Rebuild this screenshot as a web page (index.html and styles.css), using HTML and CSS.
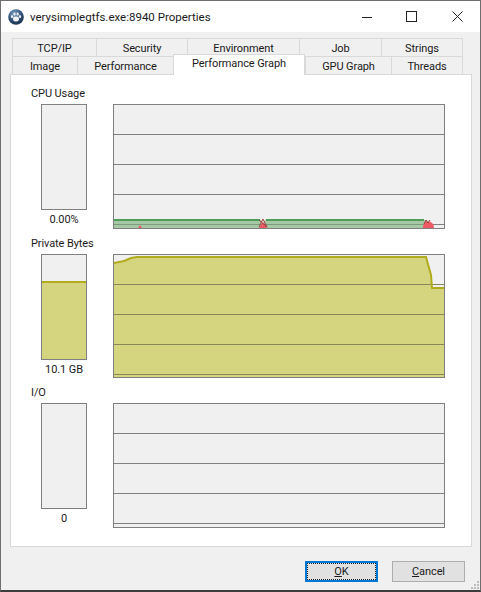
FILE: index.html
```html
<!DOCTYPE html>
<html lang="en">
<head>
<meta charset="utf-8">
<title>verysimplegtfs.exe:8940 Properties</title>
<link rel="stylesheet" href="styles.css">
</head>
<body>
<div class="window">
  <header class="titlebar">
    <svg class="app-icon" width="16" height="16" viewBox="0 0 16 16">
      <defs><radialGradient id="orb" cx="0.4" cy="0.3" r="0.8"><stop offset="0" stop-color="#7fa4c8"/><stop offset="0.6" stop-color="#2b4a70"/><stop offset="1" stop-color="#16263c"/></radialGradient></defs>
      <circle cx="8" cy="8" r="7.8" fill="url(#orb)"/>
      <ellipse cx="8" cy="10" rx="3" ry="2.4" fill="#f2f2f2"/>
      <ellipse cx="4" cy="7.6" rx="1.1" ry="1.5" fill="#f2f2f2"/>
      <ellipse cx="6.5" cy="5" rx="1.1" ry="1.6" fill="#f2f2f2"/>
      <ellipse cx="9.7" cy="5" rx="1.1" ry="1.6" fill="#f2f2f2"/>
      <ellipse cx="12" cy="7.6" rx="1.1" ry="1.5" fill="#f2f2f2"/>
    </svg>
    <span class="title">verysimplegtfs.exe:8940 Properties</span>
    <div class="controls">
      <svg class="ctl" width="10" height="10" viewBox="0 0 10 10"><path d="M0 5.5H10" stroke="#222" fill="none"/></svg>
      <svg class="ctl" width="11" height="11" viewBox="0 0 11 11"><rect x="0.5" y="0.5" width="10" height="10" stroke="#222" fill="none"/></svg>
      <svg class="ctl" width="11" height="11" viewBox="0 0 11 11"><path d="M0.5 0.5L10.5 10.5M10.5 0.5L0.5 10.5" stroke="#222" fill="none"/></svg>
    </div>
  </header>
  <div class="content">
    <div class="tabs">
      <div class="tabrow">
        <div class="tab t-tcp">TCP/IP</div>
        <div class="tab t-sec">Security</div>
        <div class="tab t-env">Environment</div>
        <div class="tab t-job">Job</div>
        <div class="tab t-str">Strings</div>
      </div>
      <div class="tabrow">
        <div class="tab t-img">Image</div>
        <div class="tab t-perf">Performance</div>
        <div class="tab t-graph active">Performance Graph</div>
        <div class="tab t-gpu">GPU Graph</div>
        <div class="tab t-thr">Threads</div>
      </div>
    </div>
    <main class="panel">
      <section class="sec">
        <div class="sec-label">CPU Usage</div>
        <div class="meter"></div>
        <div class="graph">
          <svg width="330" height="123" viewBox="0 0 330 123">
            <path class="fill-g" d="M0 115H147L149 119L151 115H310L315 116V123H0Z"/>
            <path class="grid" d="M0 29.5H330M0 59.5H330M0 89.5H330M310 119.5H330"/>
            <path class="grid-g" d="M0 119.5H310"/>
            <path class="line-g" d="M0 115H146M152 115H310"/>
            <path class="fill-r" d="M24 123L26 120L28 123Z"/>
            <path class="fill-r" d="M145 123L149 117L153 123Z"/>
            <path class="line-r" d="M145 122L149 114L153 122M145 115L153 122"/>
            <path class="fill-r" d="M309 123C309 118 312 116 314 117C317 116 320 119 320 123Z"/>
            <path class="line-r" d="M310 119L312 115L314 118L316 115"/>
          </svg>
        </div>
        <div class="value">0.00%</div>
      </section>
      <section class="sec">
        <div class="sec-label">Private Bytes</div>
        <div class="meter"><div class="meter-fill"></div></div>
        <div class="graph short">
          <svg width="330" height="122" viewBox="0 0 330 122">
            <path class="fill-y" d="M0 8L10 6L17 3L23 2H312L317 20L318 33H330V122H0Z"/>
            <path class="grid-y" d="M0 29.5H330M0 59.5H330M0 89.5H330M0 119.5H330"/>
            <path class="line-y" d="M0 8L10 6L17 3L23 2H312L317 20L318 33H330"/>
          </svg>
        </div>
        <div class="value">10.1 GB</div>
      </section>
      <section class="sec">
        <div class="sec-label">I/O</div>
        <div class="meter"></div>
        <div class="graph">
          <svg width="330" height="123" viewBox="0 0 330 123">
            <path class="grid" d="M0 29.5H330M0 59.5H330M0 89.5H330M0 119.5H330"/>
          </svg>
        </div>
        <div class="value">0</div>
      </section>
    </main>
    <footer class="footer">
      <button class="btn default"><span class="inner"><u>O</u>K</span></button>
      <button class="btn"><span class="inner"><u>C</u>ancel</span></button>
    </footer>
  </div>
  <svg class="grip" width="10" height="10" viewBox="0 0 10 10">
    <path d="M7 1h2v2H7zM4 4h2v2H4zM7 4h2v2H7zM1 7h2v2H1zM4 7h2v2H4zM7 7h2v2H7z" fill="#bdbdbd"/>
  </svg>
</div>
</body>
</html>
```
FILE: styles.css
```css
* { box-sizing: border-box; }
html, body { margin: 0; padding: 0; }
body {
  width: 481px;
  height: 592px;
  overflow: hidden;
  font-family: Roboto, "Noto Sans", sans-serif;
  font-size: 11px;
  letter-spacing: -0.1px;
  color: #1a1a1a;
}
.window {
  position: relative;
  width: 481px;
  height: 592px;
  display: flex;
  flex-direction: column;
  background: #f0f0f0;
  border: 1px solid #6e6e6e;
  border-bottom: 2px solid #3c3c3c;
}
.titlebar {
  height: 31px;
  flex: none;
  background: #fff;
  display: flex;
  align-items: center;
  padding-left: 7px;
}
.app-icon { flex: none; }
.title { margin-left: 6px; font-size: 11.5px; letter-spacing: 0; }
.controls {
  margin-left: auto;
  display: flex;
  align-items: center;
}
.ctl { display: block; }
.ctl:nth-child(1) { margin-right: 34px; }
.ctl:nth-child(2) { margin-right: 35px; }
.ctl:nth-child(3) { margin-right: 17px; }
.content {
  flex: 1;
  display: flex;
  flex-direction: column;
  padding: 6px 8px 0 9px;
}
.tabs { padding-left: 2px; flex: none; }
.tabrow { display: flex; height: 18px; }
.tab {
  display: flex;
  align-items: center;
  justify-content: center;
  flex: none;
  background: #f0f0f0;
  border: 1px solid #d9d9d9;
  border-right: 0;
  border-bottom: 0;
  padding-top: 1px;
  line-height: 1;
}
.tab:last-child { border-right: 1px solid #d9d9d9; }
.t-tcp { width: 84px; }
.t-sec { width: 91px; }
.t-env { width: 112px; }
.t-job { width: 82px; }
.t-str { width: 82px; }
.t-img { width: 65px; }
.t-perf { width: 96px; }
.t-graph { width: 132px; }
.t-gpu { width: 86px; }
.t-thr { width: 72px; }
.tab.active {
  position: relative;
  z-index: 1;
  background: #fff;
  margin: -2px 0 -1px;
  padding: 0 0 3px;
  border-right: 1px solid #d9d9d9;
}
.panel {
  flex: none;
  height: 473px;
  background: #fff;
  border: 1px solid #d9d9d9;
  padding: 10px 0 0 20px;
  display: flex;
  flex-direction: column;
  gap: 6px;
}
.sec {
  display: grid;
  grid-template-columns: 46px 332px;
  grid-template-rows: 19px 106px auto;
  column-gap: 26px;
  padding-left: 10px;
}
.sec-label {
  grid-column: 1 / 3;
  margin-left: -10px;
  line-height: 18px;
}
.meter {
  grid-column: 1;
  grid-row: 2;
  height: 106px;
  background: #f0f0f0;
  border: 1px solid #808080;
  display: flex;
  flex-direction: column;
  justify-content: flex-end;
}
.meter-fill {
  height: 78px;
  background: #d5d57f;
  border-top: 2px solid #b1ab1e;
}
.graph {
  grid-column: 2;
  grid-row: 2 / 4;
  height: 125px;
  background: #f0f0f0;
  border: 1px solid #808080;
}
.graph.short { height: 124px; }
.graph svg { display: block; }
.value {
  grid-column: 1;
  grid-row: 3;
  height: 18px;
  padding-top: 2px;
  line-height: 16px;
  text-align: center;
  white-space: nowrap;
}
.grid { fill: none; stroke: #808080; stroke-width: 1; }
.grid-y { fill: none; stroke: #87875a; stroke-width: 1; }
.grid-g { fill: none; stroke: #7c9c80; stroke-width: 1; }
.fill-g { fill: #a6c8a4; }
.line-g { fill: none; stroke: #4f9d5b; stroke-width: 2; }
.fill-r { fill: #ee5a64; }
.line-r { fill: none; stroke: #a33a3a; stroke-width: 1; }
.fill-y { fill: #d5d57f; }
.line-y { fill: none; stroke: #b1ab1e; stroke-width: 2; }
.footer {
  flex: none;
  display: flex;
  justify-content: flex-end;
  gap: 14px;
  padding: 14px 7px 0 0;
}
.btn {
  width: 73px;
  height: 21px;
  padding: 0;
  background: #e1e1e1;
  border: 1px solid #adadad;
  font: inherit;
  letter-spacing: inherit;
  color: inherit;
  display: block;
}
.btn .inner {
  display: flex;
  align-items: center;
  justify-content: center;
  height: 100%;
}
.btn.default { border: 2px solid #0078d7; }
.btn.default .inner { outline: 1px dotted #222; outline-offset: -1px; }
.grip { position: absolute; right: 0; bottom: 0; }
```
